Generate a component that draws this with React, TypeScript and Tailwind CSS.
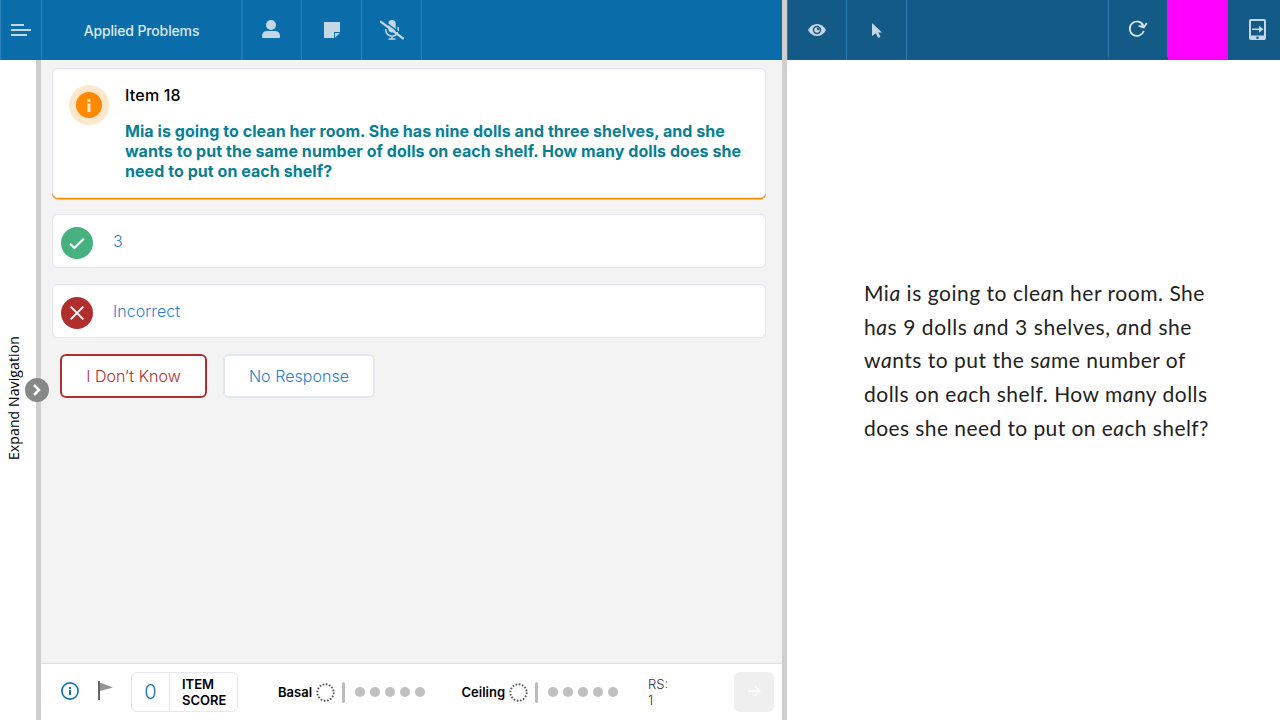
import { Fragment, type ReactNode } from "react";

function Check() {
  return (
    <div className="flex h-8 w-8 items-center justify-center rounded-full bg-[#47b27f]">
      <svg className="mt-[2px]" width="16" height="13" viewBox="0 0 16 13" fill="none" stroke="white" strokeWidth="2.2">
        <path d="M1 6.800 5.400 11 14.800 1.700" />
      </svg>
    </div>
  );
}

function Cross() {
  return (
    <div className="flex h-8 w-8 items-center justify-center rounded-full bg-[#b02e2e]">
      <svg width="14" height="14" viewBox="0 0 14 14" fill="none" stroke="white" strokeWidth="1.900">
        <path d="M.7.7 13.300 13.300M13.300.7.7 13.300" />
      </svg>
    </div>
  );
}

function Answer({ icon, children }: { icon: ReactNode; children: ReactNode }) {
  return (
    <button className="flex h-[54px] w-full items-center rounded-[6px] border border-[#e4e7f2] bg-white pt-[3px] pl-2 text-left">
      {icon}
      <span className="ml-5 pb-[3px] text-[16px] font-light leading-6 tracking-[0.08px] text-[#2d7fd3]">{children}</span>
    </button>
  );
}

function Streak({ label }: { label: string }) {
  return (
    <div className="flex items-center">
      <span className="text-[13px] font-semibold leading-4 text-black">{label}</span>
      <svg className="ml-1 mt-px" width="19" height="19" viewBox="0 0 19 19">
        <circle cx="9.5" cy="9.5" r="8.2" fill="none" stroke="#5b5b5b" strokeWidth="1.9" strokeDasharray="1.7 1.520" />
      </svg>
      <div className="ml-[7px] mt-px h-[21px] w-[3px] rounded-full bg-[#bbbebd]" />
      <div className="ml-[10px] flex gap-[5px]">
        {[0, 1, 2, 3, 4].map((n) => (
          <div key={n} className="h-[10px] w-[10px] rounded-full bg-[#bfc1c0]" />
        ))}
      </div>
    </div>
  );
}

function Line({ text, tracking }: { text: string; tracking: string }) {
  const parts = text.split("a");
  return (
    <div className={`whitespace-nowrap ${tracking}`}>
      {parts.map((part, i) => (
        <Fragment key={i}>
          {i > 0 && <span className="italic">a</span>}
          {part}
        </Fragment>
      ))}
    </div>
  );
}

const passage = [
  { text: "Mia is going to clean her room. She", tracking: "tracking-[0.53px]" },
  { text: "has 9 dolls and 3 shelves, and she", tracking: "tracking-[0.56px]" },
  { text: "wants to put the same number of", tracking: "tracking-[0.5px]" },
  { text: "dolls on each shelf. How many dolls", tracking: "tracking-[0.48px]" },
  { text: "does she need to put on each shelf?", tracking: "tracking-[0.42px]" },
];

function LeftHeader() {
  const cell = "flex h-full w-[60px] items-center justify-center border-r border-[#2c82bc]";
  return (
    <header className="flex h-[60px] bg-[#0a6daa] text-[#c5d7e6]">
      <div className="flex h-full w-[42px] items-center border-x border-[#2c82bc] pl-[10px]">
        <svg width="20" height="12" viewBox="0 0 20 12" fill="currentColor">
          <path d="M0 0h13v2H0zM0 5h20v2H0zM0 10h16v2H0z" />
        </svg>
      </div>
      <div className="flex h-full w-[201px] items-center justify-center whitespace-nowrap border-r-2 border-[#1f7ab7] text-[14px] font-medium tracking-[-0.14px] text-[#dce9f2]">
        Applied Problems
      </div>
      <div className="flex h-full w-[59px] items-center justify-center border-r border-[#2c82bc]">
        <svg className="-mt-[2px] -ml-[2px]" width="18" height="18" viewBox="0 0 18 18" fill="currentColor">
          <circle cx="9" cy="5" r="5" />
          <path d="M0 16.5C0 12 3 11 5.5 11h7C15 11 18 12 18 16.5c0 1-.6 1.500-1.500 1.500h-15C.6 18 0 17.500 0 16.500z" />
        </svg>
      </div>
      <div className={cell}>
        <svg width="16" height="16" viewBox="0 0 16 16" fill="currentColor">
          <path d="M0 0h16v10h-6v6H0zM11 11h4.800L11 15.800z" />
        </svg>
      </div>
      <div className={cell}>
        <svg width="24" height="20" viewBox="0 0 24 20">
          <rect x="8.300" y="0" width="7.400" height="12.500" rx="3.700" fill="currentColor" />
          <path d="M5.800 9v1a6.200 6.200 0 0 0 12.400 0V7M12 16v3M8.500 19h7" fill="none" stroke="currentColor" strokeWidth="1.500" />
          <path d="M1.500-.8 24.500 16.500" stroke="#0a6daa" strokeWidth="1.300" />
          <path d="M1 1.800 23 18.300" stroke="currentColor" strokeWidth="2.300" strokeLinecap="round" />
        </svg>
      </div>
    </header>
  );
}

function RightHeader() {
  return (
    <header className="flex h-[60px] bg-[#135b86] text-[#c5d7e6]">
      <div className="flex w-[60px] items-center justify-center border-x border-[#2c7eb4]">
        <svg width="18" height="12" viewBox="0 0 18 12">
          <path d="M0 6C4-2 14-2 18 6 14 14 4 14 0 6z" fill="currentColor" />
          <circle cx="9" cy="6" r="3.500" fill="none" stroke="#135b86" strokeWidth="1.400" />
          <path d="M9 6V3.500A2.500 2.500 0 0 1 11.500 6z" fill="#135b86" />
        </svg>
      </div>
      <div className="flex w-[60px] items-center justify-center border-r border-[#2c7eb4]">
        <svg width="10" height="15" viewBox="0 0 10 15" fill="currentColor">
          <path d="M0 0 10 9.500H6.300L8.500 14 6 14.800 3.900 10.300 0 13z" />
        </svg>
      </div>
      <div className="flex-1" />
      <div className="flex h-[57px] w-[60px] items-center justify-center border-x border-[#2c7eb4] pt-[1px]">
        <svg width="20" height="18" viewBox="0 0 20 18" fill="none" stroke="#dce8f0" strokeWidth="1.700">
          <path d="M15.300 5.300A7.200 7.200 0 1 0 15.800 11" />
          <path d="M10.500 5.700 15.800 7.500 18.700 3M13.300 3.500l2.500 4" />
        </svg>
      </div>
      <div className="w-[60px] bg-[#ff00ff]" />
      <div className="flex w-[52px] items-center pl-[21px]">
        <svg className="-mt-[2px]" width="17" height="21" viewBox="0 0 17 21">
          <rect width="17" height="21" rx="2" fill="currentColor" />
          <path d="M2 2h13v14.500H2z" fill="#135b86" />
          <path d="M3 9.500h7V6.800L14.500 10.300l-4.500 3.500V11H3z" fill="currentColor" />
          <circle cx="8.500" cy="18.700" r="1.300" fill="#135b86" />
        </svg>
      </div>
    </header>
  );
}

function Footer() {
  return (
    <footer className="flex h-[57px] items-center border-t border-[#dfe0e2] bg-white pl-5 pr-2">
      <svg className="-mt-[3px]" width="18" height="18" viewBox="0 0 18 18">
        <circle cx="9" cy="9" r="8.100" fill="none" stroke="#1474b0" strokeWidth="1.700" />
        <path d="M8 8h2v5H8zM8 5h2v2H8z" fill="#1474b0" />
      </svg>
      <svg className="-mt-[3px] ml-[19px]" width="15" height="19" viewBox="0 0 15 19">
        <path d="M0 0h2v19H0z" fill="#666" />
        <path d="M2 1.500 15 6.500 2 10z" fill="#949494" />
      </svg>
      <div className="ml-[18px] flex h-10 w-[107px] rounded-[6px] border border-[#e4e7f2]">
        <div className="flex w-[38px] items-center justify-center border-r border-[#e4e7f2] text-[20px] font-light text-[#176fb2]">0</div>
        <div className="flex items-center pl-3 text-[13px] font-semibold leading-4 text-black">
          ITEM
          <br />
          SCORE
        </div>
      </div>
      <div className="ml-10 w-[183.500px]">
        <Streak label="Basal" />
      </div>
      <div className="w-[186.500px]">
        <Streak label="Ceiling" />
      </div>
      <div className="w-[86px] text-[13px] font-light leading-4 text-[#333]">
        RS:
        <br />1
      </div>
      <button className="flex h-10 w-10 shrink-0 items-center justify-center rounded-[6px] bg-[#efefef]">
        <svg className="-mt-[2px]" width="13" height="12" viewBox="0 0 13 12" fill="none" stroke="white" strokeWidth="1.500">
          <path d="M0 6h12M6.500.7 12 6l-5.500 5.300" />
        </svg>
      </button>
    </footer>
  );
}

export default function App() {
  return (
    <div className="flex h-[720px] w-[1280px] overflow-hidden bg-white font-['Inter',sans-serif]">
      <section className="flex w-[782px] shrink-0 flex-col">
        <LeftHeader />
        <div className="flex min-h-0 flex-1">
          <aside className="relative flex w-[41px] shrink-0 items-center border-r-[5px] border-[#cfcfcf] bg-white">
            <span className="mt-[17px] ml-[4px] rotate-180 whitespace-nowrap font-['Open_Sans',sans-serif] text-[14px] leading-5 tracking-[0.12px] text-black [writing-mode:vertical-rl]">
              Expand Navigation
            </span>
            <button className="absolute top-[318px] left-[25px] flex h-6 w-6 items-center justify-center rounded-full bg-[#858887]">
              <svg width="8" height="12" viewBox="0 0 8 12" fill="none" stroke="white" strokeWidth="2.500">
                <path d="m1 1 5 5-5 5" />
              </svg>
            </button>
          </aside>
          <div className="flex flex-1 flex-col bg-[#f3f3f3]">
            <main className="flex-1 pt-2 pr-4 pl-[11px]">
              <article className="mr-0 flex h-[130px] w-[714px] rounded-[6px] border border-[#e4e7f2] bg-white pl-4 shadow-[0_1.5px_0_#ff8a00]">
                <div className="mt-4 flex h-10 w-10 items-center justify-center rounded-full bg-[#ffe7cc]">
                  <div className="flex h-[26px] w-[26px] items-center justify-center rounded-full bg-[#ff8a00]">
                    <svg width="4" height="13" viewBox="0 0 4 13" fill="#ffe7cc">
                      <path d="M.5 0h3v3h-3zM.5 4.500h3V13h-3z" />
                    </svg>
                  </div>
                </div>
                <div className="ml-4 pt-[14px]">
                  <h1 className="text-[16px] font-medium leading-6 tracking-[0.2px] text-black">Item 18</h1>
                  <p className="mt-[14px] w-[630px] text-[16px] font-bold leading-5 tracking-[0.055px] text-[#087f94]">
                    Mia is going to clean her room. She has nine dolls and three shelves, and she
                    <br />
                    wants to put the same number of dolls on each shelf. How many dolls does she
                    <br />
                    need to put on each shelf?
                  </p>
                </div>
              </article>
              <div className="mt-4 w-[714px] space-y-4">
                <Answer icon={<Check />}>3</Answer>
                <Answer icon={<Cross />}>Incorrect</Answer>
              </div>
              <div className="mt-4 ml-2 flex gap-4 text-[16px] font-light tracking-[0.05px]">
                <button className="h-11 w-[147px] rounded-[6px] border-2 border-[#b02e2e] bg-white text-[#b02e2e]">I Don’t Know</button>
                <button className="h-11 w-[152px] rounded-[6px] border-2 border-[#e4e7f2] bg-white text-[#2d7fd3]">No Response</button>
              </div>
            </main>
            <Footer />
          </div>
        </div>
      </section>
      <div className="w-[5px] shrink-0 bg-[#cfcfcf]" />
      <section className="flex flex-1 flex-col">
        <RightHeader />
        <div className="pt-[216px] pl-[77px] font-['Lato',sans-serif] text-[21px] leading-[33.700px] text-[#222]">
          {passage.map((line) => (
            <Line key={line.text} {...line} />
          ))}
        </div>
      </section>
    </div>
  );
}
